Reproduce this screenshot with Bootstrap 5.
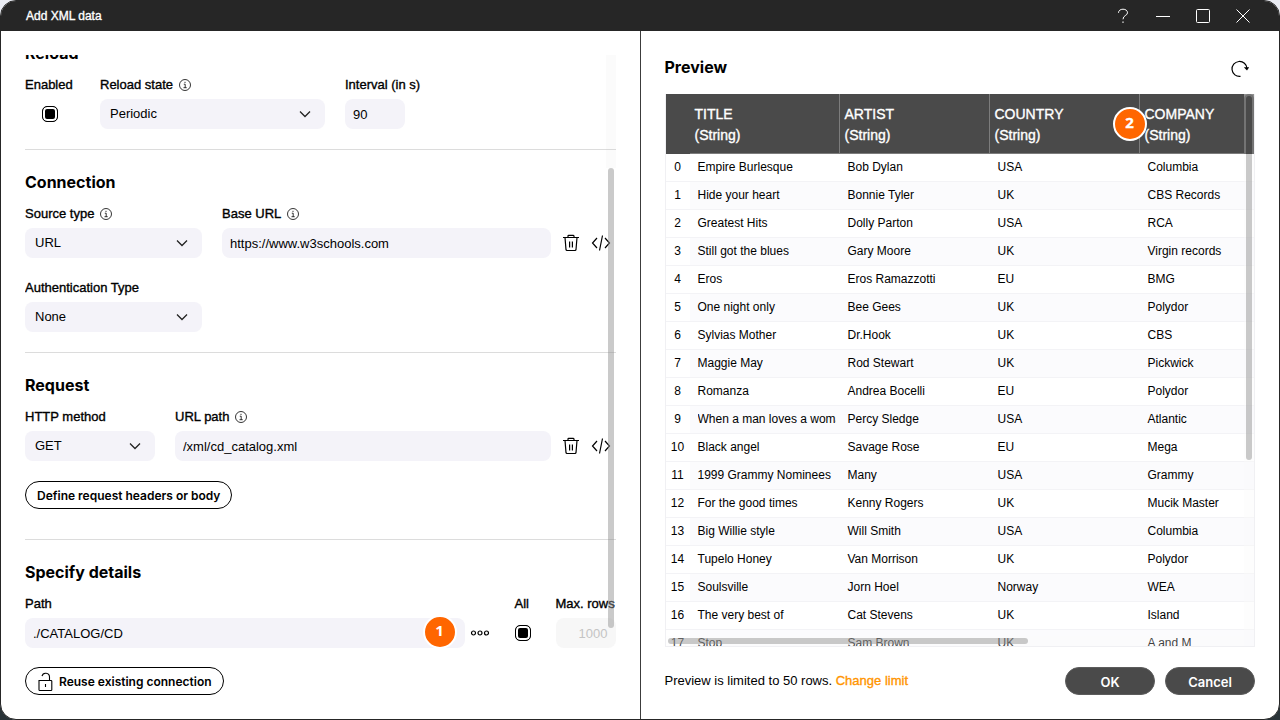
<!DOCTYPE html>
<html lang="en">
<head>
<meta charset="utf-8">
<meta name="viewport" content="width=device-width, initial-scale=1">
<title>Add XML data</title>
<link href="https://cdn.jsdelivr.net/npm/bootstrap@5.3.0/dist/css/bootstrap.min.css" rel="stylesheet">
<style>
  body { font-family: "Liberation Sans", Arial, sans-serif; font-size: 13px; line-height: 20px; color: #000; background: linear-gradient(#e9ebf2 50%, #283237 50%); }
  .dialog { border: 1px solid #262626; border-radius: 16px; background: #fff; }
  .titlebar { height: 30px; background: #262626; color: #fff; font-size: 12px; padding: 0 16px 0 25px; }
  .titlebar button, .tool { border: 0; background: none; padding: 0; display: flex; align-items: center; justify-content: center; color: inherit; }
  .titlebar button { width: 40px; height: 30px; }
  .tool { width: 20px; height: 30px; color: #000; }
  .tool-wide { width: 30px; }
  svg { fill: none; stroke: currentColor; display: block; flex: none; }
  main { min-height: 0; }
  .pane { padding: 24px; flex: 1 1 0; min-width: 0; }
  .pane-left { border-right: 1px solid #3c3c3c; }
  h2 { font-family: Inter, "Liberation Sans", sans-serif; font-size: 16px; line-height: 24px; font-weight: 700; margin: 0 0 10px; }
  .section { padding: 20px 0; border-bottom: 1px solid #dcdcdc; }
  .section:last-of-type { border: 0; padding-bottom: 0; }
  .section.roomy { padding-bottom: 30px; }
  .fields { display: flex; align-items: flex-end; gap: 20px; }
  .fields + .fields, .fields + .pill { margin-top: 20px; }
  .fields.tight { gap: 10px; }
  .fields.joined { gap: 0; }
  .medium, label { -webkit-text-stroke: .35px currentColor; }
  label { display: flex; align-items: center; gap: 6px; margin-bottom: 4px; white-space: nowrap; }
  .info { stroke-width: .8; }
  .form-control, .form-select { height: 30px; min-height: 0; border: 0; border-radius: 8px; background-color: #f4f3f9; color: #000; font-size: 13px; line-height: 20px; padding: 5px 8px; }
  .form-select { padding: 5px 40px 5px 10px; background-position: right 13px center; background-size: 14px 14px;
    background-image: url("data:image/svg+xml,%3Csvg xmlns='http://www.w3.org/2000/svg' viewBox='0 0 14 14'%3E%3Cpath d='M2 4.5l5 5 5-5' fill='none' stroke='%23222' stroke-width='1.3'/%3E%3C/svg%3E"); }
  .form-control:disabled { background: #f7f7f7; color: #c4c4c4; }
  .box { appearance: none; width: 16px; height: 16px; margin: 11px 0 7px; border: 1px solid #000; border-radius: 5px; display: block; }
  .w-enabled .box { margin-left: auto; margin-right: auto; }
  .box:checked { background: #000; box-shadow: inset 0 0 0 2px #fff; }
  .w-enabled { width: 50px; } .w-state { width: 225px; } .w-num { width: 60px; } .w-type { width: 177px; } .w-method { width: 130px; } .w-all { width: 21px; }
  .after-enabled { margin-left: 5px; }
  .tools { gap: 10px; padding-right: 5px; }
  .pill { height: 28px; border-radius: 14px; border: 1px solid #000; background: #fff; color: #000; font-family: Inter, "Liberation Sans", sans-serif; font-size: 12px; line-height: 20px; font-weight: 600; padding: 4px 11px 2px; white-space: nowrap; }
  .pill-dark { background: #4a4a4a; border-color: #5c5c5c; color: #fff; width: 90px; font-size: 13px; }
  .marker { position: absolute; width: 34px; height: 34px; border: 2px solid #fff; border-radius: 50%; background: #ff6600; color: #fff; font: 700 15px/27px "Open Sans", sans-serif; text-align: center; z-index: 2; }
  .marker-path { right: 8px; bottom: -1px; }
  .marker-col { left: -27px; top: 13px; }
  .form-body { margin: 0 0 19px; }
  .preview-head { margin-bottom: 15px; }
  .refresh { margin-right: 5px; }
  .track-y { position: absolute; right: 0; top: 0; bottom: 0; width: 10px; }
  .form-body .track-y { height: 113px; background: rgba(200,200,200,.08); }
  .thumb { position: absolute; border-radius: 3px; background: rgba(140,140,140,.46); }
  .thumb-form { right: 2px; top: 113px; width: 6px; height: 460px; }
  .thumb-y { right: 2px; top: 2px; width: 6px; height: 364px; }
  .thumb-x { left: 2px; bottom: 2px; width: 360px; height: 6px; }
  .track-x { position: absolute; left: 0; right: 10px; bottom: 0; height: 10px; background: rgba(250,250,250,.25); }
  .grid-view .track-y { background: rgba(250,250,250,.4); }
  .grid-view .track-head { position: absolute; right: 0; top: 0; width: 10px; height: 60px; border: 2px solid #747474; border-bottom: 0; border-radius: 5px 5px 0 0; background: #4a4a4a; }
  .grid-view { border: 1px solid #f0f0f3; border-top: 0; }
  .grid-view table { table-layout: fixed; width: 624px; border-collapse: separate; border-spacing: 0; font-size: 12px; line-height: 20px; }
  .grid-view thead th { height: 60px; background: #4a4a4a; color: #fff; font-size: 14px; line-height: 21px; font-weight: 400; padding: 2px 5px 0; border-right: 1px solid #7c7c7c; border-bottom: 1px solid #7c7c7c; position: relative; }
  .grid-view thead th:first-child { border-color: #4a4a4a; }
  .col-no { width: 24px; }
  .grid-view tbody td, .grid-view tbody th { height: 28px; padding: 0 4px 1px 8px; border-bottom: 1px solid #f3f3f6; white-space: nowrap; }
  .grid-view tbody th { padding: 0 0 1px; text-align: center; font-weight: 400; }
  .grid-view tbody tr:nth-child(even) td { background: #fbfbfd; }
  .limit-link { color: #ff9500; text-decoration: none; }
  .preview-foot { margin-top: 20px; gap: 10px; }
</style>
</head>
<body>
<svg class="d-none" aria-hidden="true">
  <symbol id="i-info" viewBox="0 0 12 12"><circle cx="6" cy="6" r="5.500"/><path d="M4.800 5.200h1.400v3.500M4.500 8.700h3.200M6 2.800v1.200"/></symbol>
  <symbol id="i-trash" viewBox="0 0 18 18"><path d="M1 3.500h16M6 3.500V2a.6.6 0 0 1 .6-.6h4.800a.6.6 0 0 1 .6.6v1.500M3 3.500l1 12.200a1 1 0 0 0 1 .8h8a1 1 0 0 0 1-.8l1-12.200M7.600 7.500v6M10.400 7.500v6" stroke-width="1.200"/></symbol>
  <symbol id="i-code" viewBox="0 0 20 18"><path d="M6 4L1.500 9 6 14M14 4l4.500 5-4.500 5M11.500 1.500l-3 15" stroke-width="1.200"/></symbol>
</svg>
<div class="dialog d-flex flex-column vh-100 overflow-hidden">
  <header class="titlebar d-flex align-items-center">
    <span class="medium me-auto">Add XML data</span>
    <button type="button" aria-label="Help"><svg width="16" height="16" viewBox="0 0 16 16"><path d="M3.500 4.800C3.500 2.600 5.400 1.200 8 1.200s4.500 1.400 4.500 3.600C12.500 7.600 8 7.300 8 11.300M8 13.400v1.600"/></svg></button>
    <button type="button" aria-label="Minimize"><svg width="14" height="14" viewBox="0 0 14 14"><path d="M0 7.500h14"/></svg></button>
    <button type="button" aria-label="Maximize"><svg width="14" height="14" viewBox="0 0 14 14"><rect x=".5" y=".5" width="13" height="13" rx="1"/></svg></button>
    <button type="button" aria-label="Close"><svg width="14" height="14" viewBox="0 0 14 14"><path d="M.5.5l13 13M13.500.5l-13 13"/></svg></button>
  </header>

  <main class="d-flex flex-grow-1">
    <form class="pane pane-left d-flex flex-column">
      <div class="form-body position-relative flex-grow-1 overflow-hidden d-flex flex-column justify-content-end">
        <section class="section">
          <h2>Reload</h2>
          <div class="fields">
            <div class="w-enabled"><label for="enabled">Enabled</label><input class="box" type="checkbox" id="enabled" checked></div>
            <div class="w-state after-enabled"><label for="state">Reload state <svg class="info" width="12" height="12"><use href="#i-info"/></svg></label>
              <select class="form-select" id="state"><option>Periodic</option></select></div>
            <div class="w-num"><label for="interval">Interval (in s)</label><input class="form-control" id="interval" value="90"></div>
          </div>
        </section>

        <section class="section">
          <h2>Connection</h2>
          <div class="fields tight">
            <div class="fields flex-grow-1">
              <div class="w-type"><label for="src">Source type <svg class="info" width="12" height="12"><use href="#i-info"/></svg></label>
                <select class="form-select" id="src"><option>URL</option></select></div>
              <div class="flex-grow-1"><label for="base">Base URL <svg class="info" width="12" height="12"><use href="#i-info"/></svg></label>
                <input class="form-control" id="base" value="https://www.w3schools.com"></div>
            </div>
            <div class="tools d-flex">
              <button class="tool" type="button" aria-label="Clear base URL"><svg width="18" height="18"><use href="#i-trash"/></svg></button>
              <button class="tool" type="button" aria-label="Use expression for base URL"><svg width="20" height="18"><use href="#i-code"/></svg></button>
            </div>
          </div>
          <div class="fields">
            <div class="w-type"><label for="auth">Authentication Type</label>
              <select class="form-select" id="auth"><option>None</option></select></div>
          </div>
        </section>

        <section class="section roomy">
          <h2>Request</h2>
          <div class="fields tight">
            <div class="fields flex-grow-1">
              <div class="w-method"><label for="method">HTTP method</label>
                <select class="form-select" id="method"><option>GET</option></select></div>
              <div class="flex-grow-1"><label for="urlpath">URL path <svg class="info" width="12" height="12"><use href="#i-info"/></svg></label>
                <input class="form-control" id="urlpath" value="/xml/cd_catalog.xml"></div>
            </div>
            <div class="tools d-flex">
              <button class="tool" type="button" aria-label="Clear URL path"><svg width="18" height="18"><use href="#i-trash"/></svg></button>
              <button class="tool" type="button" aria-label="Use expression for URL path"><svg width="20" height="18"><use href="#i-code"/></svg></button>
            </div>
          </div>
          <button class="pill d-block" type="button">Define request headers or body</button>
        </section>

        <section class="section">
          <h2>Specify details</h2>
          <div class="fields">
            <div class="fields joined flex-grow-1">
              <div class="flex-grow-1"><label for="path">Path</label>
                <div class="position-relative"><input class="form-control" id="path" value="./CATALOG/CD"><span class="marker marker-path">1</span></div></div>
              <button class="tool tool-wide" type="button" aria-label="More"><svg width="20" height="8" viewBox="0 0 20 8"><g stroke-width="1.200"><circle cx="3.500" cy="4" r="2"/><circle cx="10" cy="4" r="2"/><circle cx="16.500" cy="4" r="2"/></g></svg></button>
            </div>
            <div class="w-all"><label for="all">All</label><input class="box" type="checkbox" id="all" checked></div>
            <div class="w-num"><label for="max">Max. rows</label><input class="form-control text-end" id="max" value="1000" disabled></div>
          </div>
        </section>
        <span class="track-y"></span><span class="thumb thumb-form"></span>
      </div>
      <div><button class="pill d-flex align-items-center" type="button">
        <svg class="me-1" width="18" height="20" viewBox="0 0 18 20"><path d="M2 8.500h12a.8.8 0 0 1 .8.8v8.400a.8.8 0 0 1-.8.800H2.800a.8.8 0 0 1-.8-.8zM5 4.200a3.800 3.800 0 0 1 7.500.8v3.500M8.500 12v3" stroke-width="1.100"/></svg>
        Reuse existing connection</button></div>
    </form>

    <section class="pane d-flex flex-column">
      <div class="preview-head d-flex justify-content-between">
        <h2 class="mb-0">Preview</h2>
        <button class="tool refresh h-auto pt-1" type="button" aria-label="Refresh preview"><svg width="20" height="20" viewBox="0 0 20 20"><path d="M10.500 17.400A7.500 7.500 0 1 1 17 9.500" stroke-width="1.200"/><path d="M13.800 8.200h5.400L17 11.400z" fill="currentColor" stroke="none"/></svg></button>
      </div>
      <div class="grid-view position-relative flex-grow-1 overflow-hidden">
        <table>
          <colgroup><col class="col-no"><col><col><col><col></colgroup>
          <thead class="medium"><tr><th></th><th>TITLE<br>(String)</th><th>ARTIST<br>(String)</th><th>COUNTRY<br>(String)</th><th>COMPANY<br>(String)<span class="marker marker-col">2</span></th></tr></thead>
          <tbody>
            <tr><th>0</th><td>Empire Burlesque</td><td>Bob Dylan</td><td>USA</td><td>Columbia</td></tr>
            <tr><th>1</th><td>Hide your heart</td><td>Bonnie Tyler</td><td>UK</td><td>CBS Records</td></tr>
            <tr><th>2</th><td>Greatest Hits</td><td>Dolly Parton</td><td>USA</td><td>RCA</td></tr>
            <tr><th>3</th><td>Still got the blues</td><td>Gary Moore</td><td>UK</td><td>Virgin records</td></tr>
            <tr><th>4</th><td>Eros</td><td>Eros Ramazzotti</td><td>EU</td><td>BMG</td></tr>
            <tr><th>5</th><td>One night only</td><td>Bee Gees</td><td>UK</td><td>Polydor</td></tr>
            <tr><th>6</th><td>Sylvias Mother</td><td>Dr.Hook</td><td>UK</td><td>CBS</td></tr>
            <tr><th>7</th><td>Maggie May</td><td>Rod Stewart</td><td>UK</td><td>Pickwick</td></tr>
            <tr><th>8</th><td>Romanza</td><td>Andrea Bocelli</td><td>EU</td><td>Polydor</td></tr>
            <tr><th>9</th><td><div class="overflow-hidden">When a man loves a woman</div></td><td>Percy Sledge</td><td>USA</td><td>Atlantic</td></tr>
            <tr><th>10</th><td>Black angel</td><td>Savage Rose</td><td>EU</td><td>Mega</td></tr>
            <tr><th>11</th><td>1999 Grammy Nominees</td><td>Many</td><td>USA</td><td>Grammy</td></tr>
            <tr><th>12</th><td>For the good times</td><td>Kenny Rogers</td><td>UK</td><td>Mucik Master</td></tr>
            <tr><th>13</th><td>Big Willie style</td><td>Will Smith</td><td>USA</td><td>Columbia</td></tr>
            <tr><th>14</th><td>Tupelo Honey</td><td>Van Morrison</td><td>UK</td><td>Polydor</td></tr>
            <tr><th>15</th><td>Soulsville</td><td>Jorn Hoel</td><td>Norway</td><td>WEA</td></tr>
            <tr><th>16</th><td>The very best of</td><td>Cat Stevens</td><td>UK</td><td>Island</td></tr>
            <tr><th>17</th><td>Stop</td><td>Sam Brown</td><td>UK</td><td>A and M</td></tr>
          </tbody>
        </table>
        <span class="track-x"></span><span class="track-y"></span>
        <span class="thumb thumb-x"></span><span class="thumb thumb-y"></span><span class="track-head"></span>
      </div>
      <footer class="preview-foot d-flex align-items-center">
        <span>Preview is limited to 50 rows. <a class="limit-link medium" href="#">Change limit</a></span>
        <button class="pill pill-dark ms-auto" type="button">OK</button>
        <button class="pill pill-dark" type="button">Cancel</button>
      </footer>
    </section>
  </main>
</div>
<script src="https://cdn.jsdelivr.net/npm/bootstrap@5.3.0/dist/js/bootstrap.bundle.min.js"></script>
</body>
</html>
